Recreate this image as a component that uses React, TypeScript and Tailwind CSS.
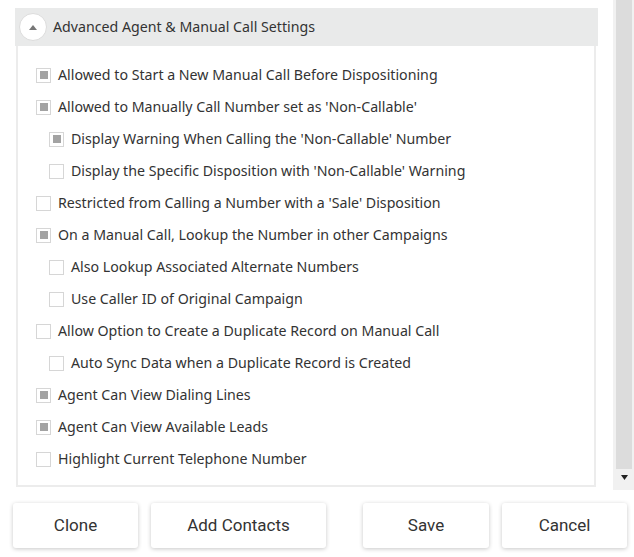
import React from "react";

type Item = { label: string; checked: boolean; sub?: boolean };

const items: Item[] = [
  { label: "Allowed to Start a New Manual Call Before Dispositioning", checked: true },
  { label: "Allowed to Manually Call Number set as 'Non-Callable'", checked: true },
  { label: "Display Warning When Calling the 'Non-Callable' Number", checked: true, sub: true },
  { label: "Display the Specific Disposition with 'Non-Callable' Warning", checked: false, sub: true },
  { label: "Restricted from Calling a Number with a 'Sale' Disposition", checked: false },
  { label: "On a Manual Call, Lookup the Number in other Campaigns", checked: true },
  { label: "Also Lookup Associated Alternate Numbers", checked: false, sub: true },
  { label: "Use Caller ID of Original Campaign", checked: false, sub: true },
  { label: "Allow Option to Create a Duplicate Record on Manual Call", checked: false },
  { label: "Auto Sync Data when a Duplicate Record is Created", checked: false, sub: true },
  { label: "Agent Can View Dialing Lines", checked: true },
  { label: "Agent Can View Available Leads", checked: true },
  { label: "Highlight Current Telephone Number", checked: false },
];

function Checkbox({ checked }: { checked: boolean }) {
  return (
    <span className="flex h-[15px] w-[15px] shrink-0 items-center justify-center border border-[#d6d6d6] bg-white">
      {checked && <span className="h-[8px] w-[8px] bg-[#a3a3a3]" />}
    </span>
  );
}

function Btn({ label, w }: { label: string; w: string }) {
  return (
    <button
      className={`${w} h-[45px] rounded-[3px] bg-white text-[17px] text-[#333] shadow-[0_1px_4px_rgba(0,0,0,0.22)]`}
      style={{ fontFamily: "Roboto, sans-serif" }}
    >
      {label}
    </button>
  );
}

export default function App() {
  return (
    <div className="h-[557px] w-[634px] overflow-hidden bg-white" style={{ fontFamily: "'Noto Sans', sans-serif" }}>
      <div className="flex h-[490px]">
        <div className="flex-1 pl-[15px] pr-[15px] pt-[8px]">
          <div className="flex h-[38px] items-center gap-[6px] bg-[#e9eaea] pl-[4px]">
            <span className="flex h-[28px] w-[28px] items-center justify-center rounded-full border border-[#dcdcdc] bg-white">
              <svg width="8" height="5" viewBox="0 0 8 5">
                <path d="M4 0 L8 5 L0 5 Z" fill="#777" />
              </svg>
            </span>
            <span className="text-[14.2px] text-[#333]">Advanced Agent &amp; Manual Call Settings</span>
          </div>
          <div className="mr-[2px] ml-px flex h-[441px] flex-col border-x-2 border-b-2 border-[#ececec] pt-[13px]">
            {items.map((it) => (
              <div
                key={it.label}
                className={`flex h-[32px] items-center gap-[7px] ${it.sub ? "pl-[31px]" : "pl-[18px]"}`}
              >
                <Checkbox checked={it.checked} />
                <span className="text-[14.2px] text-[#333]">{it.label}</span>
              </div>
            ))}
          </div>
        </div>
        <div className="relative w-[21px] bg-[#f1f1f1]">
          <div className="ml-[3px] h-[469px] w-[16px] bg-[#dcdcdc]" />
          <svg className="absolute left-[8px] top-[475px]" width="7" height="5" viewBox="0 0 7 5">
            <path d="M0 0 L7 0 L3.5 5 Z" fill="#222" />
          </svg>
        </div>
      </div>
      <div className="flex items-center justify-between pl-[13px] pr-[7px] pt-[13px]">
        <div className="flex gap-[13px]">
          <Btn label="Clone" w="w-[125px]" />
          <Btn label="Add Contacts" w="w-[175px]" />
        </div>
        <div className="flex gap-[13px]">
          <Btn label="Save" w="w-[126px]" />
          <Btn label="Cancel" w="w-[125px]" />
        </div>
      </div>
    </div>
  );
}
